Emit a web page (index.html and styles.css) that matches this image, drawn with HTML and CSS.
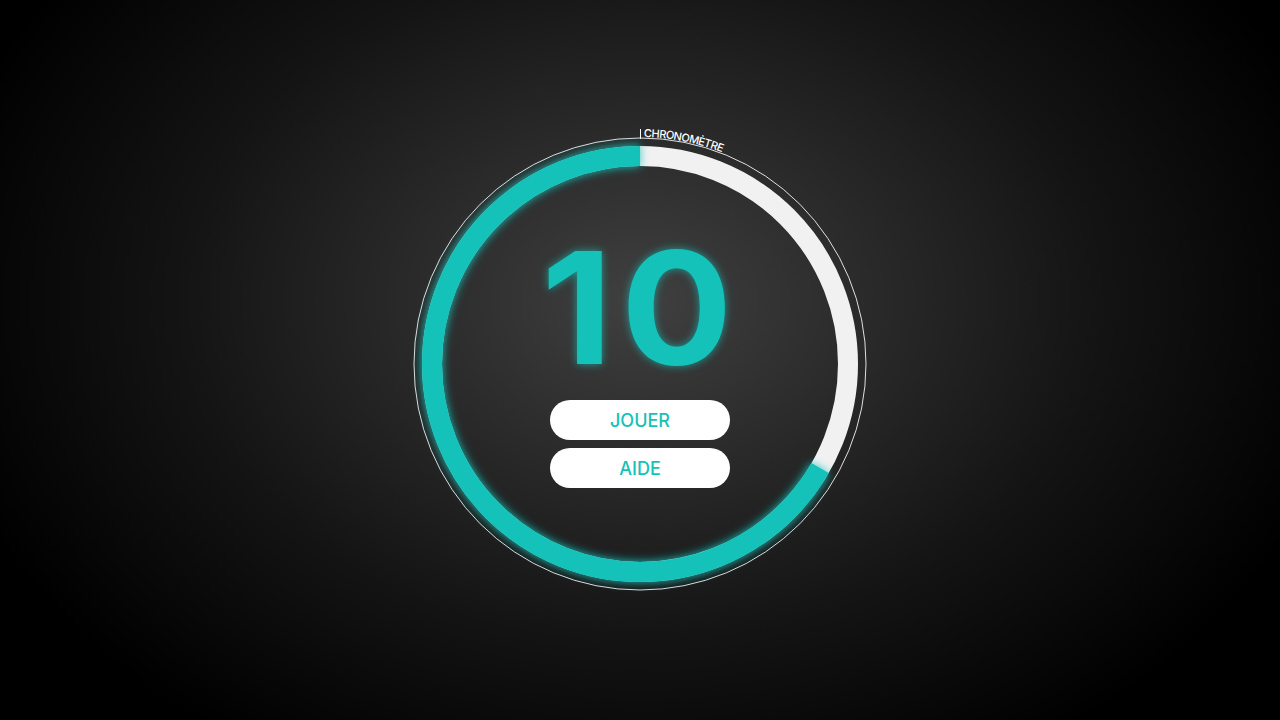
FILE: index.html
```html
<!DOCTYPE html>
<html lang="fr">
<head>
<meta charset="utf-8">
<title>Chronomètre</title>
<link rel="stylesheet" href="styles.css">
</head>
<body>
<main class="page">
  <div class="timer">
    <svg class="dial" width="480" height="480" viewBox="0 0 480 480" aria-hidden="true">
      <defs>
        <filter id="glow" x="-20%" y="-20%" width="140%" height="140%">
          <feGaussianBlur stdDeviation="4"/>
        </filter>
        <path id="labelPath" d="M240,13 A227,227 0 1,1 239.99,13"/>
      </defs>
      <circle class="outer" cx="240" cy="240" r="226"/>
      <circle class="track" cx="240" cy="240" r="208"/>
      <g transform="rotate(-90 240 240)">
        <circle class="progress-glow" cx="240" cy="240" r="208" filter="url(#glow)"
          stroke-dasharray="871.3 1306.9" stroke-dashoffset="-435.6"/>
        <circle class="progress" cx="240" cy="240" r="208"
          stroke-dasharray="871.3 1306.9" stroke-dashoffset="-435.6"/>
      </g>
      <line class="tick" x1="240.5" y1="5" x2="240.5" y2="15"/>
      <text class="label"><textPath href="#labelPath" startOffset="4" textLength="80">CHRONOMÈTRE</textPath></text>
    </svg>
    <div class="content">
      <div class="count">10</div>
      <div class="actions">
        <button class="btn">JOUER</button>
        <button class="btn">AIDE</button>
      </div>
    </div>
  </div>
</main>
</body>
</html>
```

FILE: styles.css
```css
html, body {
  margin: 0;
  padding: 0;
}

body {
  width: 1280px;
  height: 720px;
  overflow: hidden;
  font-family: Inter, "Noto Sans", sans-serif;
  background: radial-gradient(ellipse 760px 560px at 640px 300px, #404040 0%, #2a2a2a 30%, #141414 60%, #000 95%);
}

.page {
  height: 720px;
  box-sizing: border-box;
  padding-top: 8px;
  display: flex;
  align-items: center;
  justify-content: center;
}

.timer {
  display: grid;
  width: 480px;
  height: 480px;
}

.dial,
.content {
  grid-area: 1 / 1;
}

.outer {
  fill: none;
  stroke: rgba(255, 255, 255, 0.85);
  stroke-width: 1;
}

.track {
  fill: none;
  stroke: #f1f1f1;
  stroke-width: 20;
}

.progress-glow {
  fill: none;
  stroke: rgba(20, 193, 185, 0.85);
  stroke-width: 22;
}

.progress {
  fill: none;
  stroke: #14c2b9;
  stroke-width: 20;
}

.tick {
  stroke: #fff;
  stroke-width: 1;
}

.label {
  fill: #fff;
  font-family: Inter, "Noto Sans", sans-serif;
  font-weight: 500;
  font-size: 11px;
}

.content {
  display: flex;
  flex-direction: column;
  align-items: center;
  padding-top: 106px;
}

.count {
  font-size: 156px;
  line-height: 156px;
  height: 156px;
  font-weight: 700;
  color: #14c2b9;
  letter-spacing: 8px;
  margin-left: 2px;
  transform: scaleX(1.06);
  text-shadow: 0 0 8px rgba(20, 194, 185, 0.75);
}

.actions {
  margin-top: 14px;
  display: flex;
  flex-direction: column;
  gap: 8px;
}

.btn {
  width: 180px;
  height: 40px;
  border: none;
  border-radius: 20px;
  background: #fff;
  color: #14c2b9;
  font-family: Inter, "Noto Sans", sans-serif;
  font-size: 18px;
  font-weight: 500;
  padding: 0;
  cursor: pointer;
}
```
